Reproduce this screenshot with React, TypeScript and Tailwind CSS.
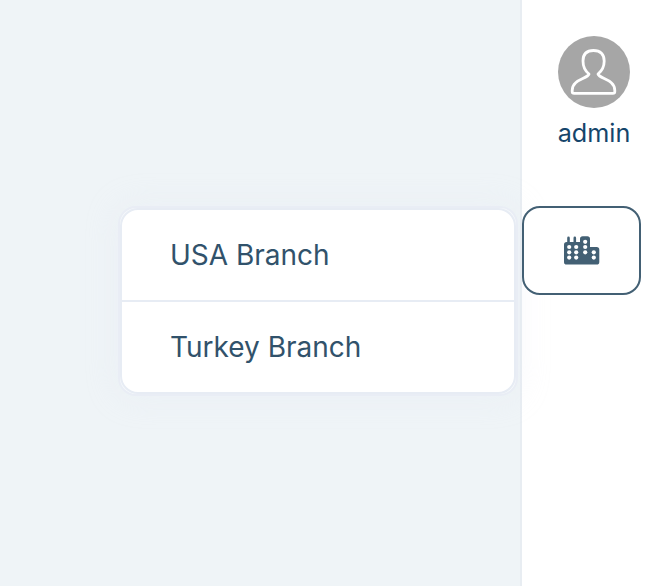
const branches = ["USA Branch", "Turkey Branch"];

const cityWindows = [
  [5.2, 11], [12.2, 11], [5.2, 16.3], [12.2, 16.3], [5.2, 21.6], [12.2, 21.6],
  [21.2, 5.8], [21.2, 11], [21.2, 16.3],
  [29.8, 16.3], [29.8, 21.6],
];

function Avatar() {
  return (
    <svg className="block size-[72px]" viewBox="0 0 72 72" fill="none">
      <circle cx="36" cy="36" r="36" fill="#a6a6a6" />
      <path
        d="M35.5 14.5C28.5 14.5 25 18.5 25 25C25 31 27.2 35 31 38C29.5 43.2 14.2 43 14.2 54.5V55.5Q14.2 57.4 16.2 57.4H54.8Q56.8 57.4 56.8 55.5V54.5C56.8 43 41.5 43.2 40 38C43.8 35 46.2 31 46.2 25C46.2 18.5 42.5 14.5 35.5 14.5Z"
        stroke="#fff"
        strokeWidth="2.8"
        strokeLinejoin="round"
      />
    </svg>
  );
}

function CityIcon() {
  return (
    <svg className="block h-[29px] w-9" viewBox="0 0 36 29">
      <path
        fill="#436074"
        d="M3.2 6V1.9Q3.2 .5 4.5 .5T5.8 1.9V6H9.5V1.9Q9.5 .5 10.8 .5T12.1 1.9V6H16V3Q16 .3 18.7 .3H23.3Q26 .3 26 3V11H32.6Q35.3 11 35.3 13.7V25.9Q35.3 28.6 32.6 28.6H2.7Q0 28.6 0 25.9V8.7Q0 6 2.7 6Z"
      />
      {cityWindows.map(([cx, cy]) => (
        <circle key={`${cx}-${cy}`} cx={cx} cy={cy} r="2.1" fill="#fff" />
      ))}
    </svg>
  );
}

function BranchMenu() {
  return (
    <div className="absolute top-0 right-[123px] w-[400px] rounded-[18px] border-2 border-[#e9edf5] bg-[#f6f9fb] shadow-[0_0_30px_2px_rgba(228,231,243,0.25)]">
      <ul className="overflow-hidden rounded-[18px] border-2 border-[#e7ecf4] bg-white">
        {branches.map((name) => (
          <li
            key={name}
            className="flex h-[90px] items-center pl-12 text-[28px] text-[#31526b] not-first:h-[92px] not-first:border-t-2 not-first:border-[#e7ecf4]"
          >
            {name}
          </li>
        ))}
      </ul>
    </div>
  );
}

export default function App() {
  return (
    <div className="flex h-screen overflow-hidden bg-[#eff4f7] font-['Inter',sans-serif]">
      <main className="flex-1" />
      <aside className="w-[140px] border-l-2 border-[#e8edf2] bg-white pt-9">
        <div className="flex flex-col items-center pl-[6px]">
          <Avatar />
          <span className="mt-1 text-[25.2px] leading-[42px] text-[#15456b]">admin</span>
        </div>
        <div className="relative mt-[52px] w-[119px]">
          <BranchMenu />
          <button className="relative flex h-[89px] w-[119px] items-center justify-center rounded-[18px] border-2 border-[#436074] bg-white">
            <CityIcon />
          </button>
        </div>
      </aside>
    </div>
  );
}
